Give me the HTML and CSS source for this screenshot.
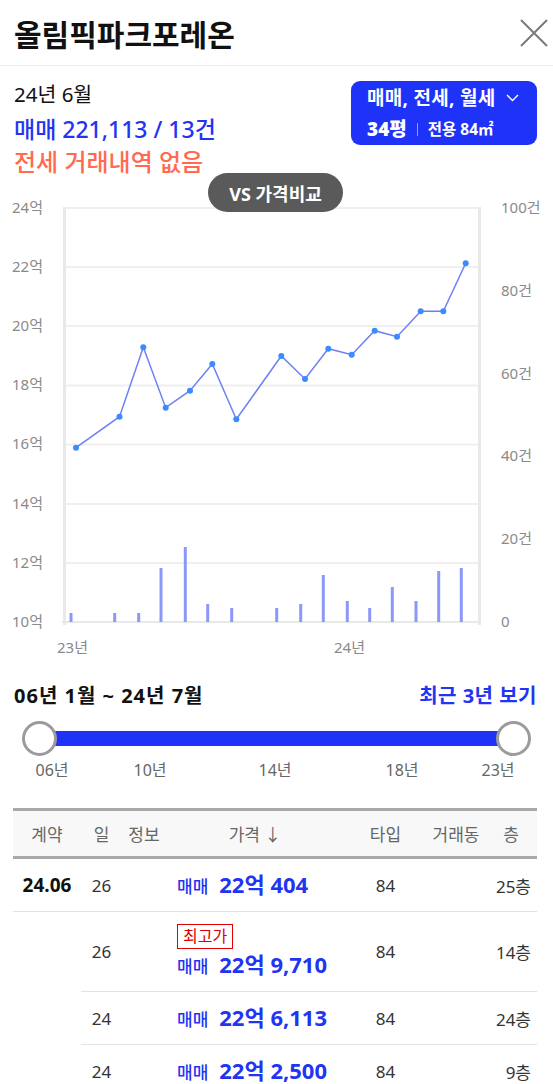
FILE: index.html
```html
<!DOCTYPE html>
<html lang="ko">
<head>
    <meta charset="UTF-8">
    <meta name="viewport" content="width=device-width, initial-scale=1.0">
    <title>올림픽파크포레온 실거래가</title>
    <link rel="stylesheet" href="styles.css">
</head>
<body>

<div class="panel">
    <div class="header">
        <h1>올림픽파크포레온</h1>
        <button class="close" aria-label="닫기">
            <svg width="30" height="30" viewBox="0 0 30 30">
                <path d="M2 2 L28 28 M28 2 L2 28" stroke="#7a7a7a" stroke-width="2" fill="none"/>
            </svg>
        </button>
    </div>

    <div class="summary">
        <div class="summary-text">
            <div class="month">24년 6월</div>
            <div class="trade">매매 221,113 / 13건</div>
            <div class="rent">전세 거래내역 없음</div>
        </div>
        <div class="filter">
            <div class="filter-type">매매, 전세, 월세
                <svg width="13" height="8" viewBox="0 0 13 8">
                    <path d="M1 1 L6.5 6.5 L12 1" stroke="#fff" stroke-width="1.4" fill="none"/>
                </svg>
            </div>
            <div class="filter-size"><b>34평</b><span class="sep"></span>전용 84㎡</div>
        </div>
    </div>

    <div class="chart">
        <button class="vs">VS 가격비교</button>
        <svg width="553" height="485" viewBox="0 180 553 485">
            <!-- grid -->
            <g stroke="#efefef" stroke-width="2">
                <line x1="64" y1="208" x2="479" y2="208"/>
                <line x1="64" y1="267" x2="479" y2="267"/>
                <line x1="64" y1="326" x2="479" y2="326"/>
                <line x1="64" y1="385.5" x2="479" y2="385.5"/>
                <line x1="64" y1="444.5" x2="479" y2="444.5"/>
                <line x1="64" y1="504" x2="479" y2="504"/>
                <line x1="64" y1="563" x2="479" y2="563"/>
            </g>
            <g stroke="#e9e9e9">
                <line x1="64.5" y1="207" x2="64.5" y2="625" stroke-width="3"/>
                <line x1="479.5" y1="207" x2="479.5" y2="625" stroke-width="3"/>
                <line x1="62" y1="622" x2="481" y2="622" stroke-width="2"/>
            </g>

            <!-- axis labels -->
            <g class="axis" text-anchor="end">
                <text x="43" y="213">24억</text>
                <text x="43" y="272">22억</text>
                <text x="43" y="331">20억</text>
                <text x="43" y="390">18억</text>
                <text x="43" y="449">16억</text>
                <text x="43" y="509">14억</text>
                <text x="43" y="568">12억</text>
                <text x="43" y="627">10억</text>
            </g>
            <g class="axis">
                <text x="501" y="213">100건</text>
                <text x="501" y="296">80건</text>
                <text x="501" y="379">60건</text>
                <text x="501" y="461">40건</text>
                <text x="501" y="544">20건</text>
                <text x="501" y="627">0</text>
            </g>
            <g class="axis" text-anchor="middle">
                <text x="72.5" y="653">23년</text>
                <text x="349.5" y="653">24년</text>
            </g>

            <!-- volume bars -->
            <g fill="#8b98fb">
                <rect x="69.5" y="613" width="3" height="9"/>
                <rect x="113.2" y="613" width="3" height="9"/>
                <rect x="137.2" y="613" width="3" height="9"/>
                <rect x="159.5" y="568" width="3" height="54"/>
                <rect x="183.8" y="547" width="3" height="75"/>
                <rect x="206.2" y="604" width="3" height="18"/>
                <rect x="230.2" y="608" width="3" height="14"/>
                <rect x="275.2" y="608" width="3" height="14"/>
                <rect x="299.2" y="604" width="3" height="18"/>
                <rect x="321.8" y="575" width="3" height="47"/>
                <rect x="345.8" y="601" width="3" height="21"/>
                <rect x="368.2" y="608" width="3" height="14"/>
                <rect x="390.8" y="587" width="3" height="35"/>
                <rect x="414.5" y="601" width="3" height="21"/>
                <rect x="437.2" y="571" width="3" height="51"/>
                <rect x="459.8" y="568" width="3" height="54"/>
            </g>

            <!-- price line -->
            <polyline fill="none" stroke="#6f80f6" stroke-width="1.5"
                points="76,447.7 119.5,416.7 143.3,347.3 165.7,407.7 190,390.7 212.3,364 236.3,419.3 281.3,356 305,379 328.3,348.7 351.7,354.7 374.7,330.7 397,336.7 420.7,311.3 443.3,311.3 465.7,263.3"/>
            <g fill="#3b8bff">
                <circle cx="76" cy="447.7" r="3"/>
                <circle cx="119.5" cy="416.7" r="3"/>
                <circle cx="143.3" cy="347.3" r="3"/>
                <circle cx="165.7" cy="407.7" r="3"/>
                <circle cx="190" cy="390.7" r="3"/>
                <circle cx="212.3" cy="364" r="3"/>
                <circle cx="236.3" cy="419.3" r="3"/>
                <circle cx="281.3" cy="356" r="3"/>
                <circle cx="305" cy="379" r="3"/>
                <circle cx="328.3" cy="348.7" r="3"/>
                <circle cx="351.7" cy="354.7" r="3"/>
                <circle cx="374.7" cy="330.7" r="3"/>
                <circle cx="397" cy="336.7" r="3"/>
                <circle cx="420.7" cy="311.3" r="3"/>
                <circle cx="443.3" cy="311.3" r="3"/>
                <circle cx="465.7" cy="263.3" r="3"/>
            </g>
        </svg>
    </div>

    <div class="range">
        <div class="range-head">
            <span class="range-label">06년 1월 ~ 24년 7월</span>
            <a class="recent">최근 3년 보기</a>
        </div>
        <div class="slider">
            <span class="knob"></span>
            <div class="track"></div>
            <span class="knob"></span>
        </div>
        <div class="ticks">
            <span style="left: 38px">06년</span>
            <span style="left: 136px">10년</span>
            <span style="left: 261px">14년</span>
            <span style="left: 388px">18년</span>
            <span style="left: 484px">23년</span>
        </div>
    </div>

    <table class="deals">
        <colgroup>
            <col style="width: 68px">
            <col style="width: 41px">
            <col style="width: 44px">
            <col style="width: 178px">
            <col style="width: 83px">
            <col style="width: 58px">
            <col style="width: 52px">
        </colgroup>
        <thead>
            <tr>
                <th>계약</th>
                <th>일</th>
                <th>정보</th>
                <th>가격 ↓</th>
                <th>타입</th>
                <th>거래동</th>
                <th>층</th>
            </tr>
        </thead>
        <tbody>
            <tr>
                <td class="date">24.06</td>
                <td class="day">26</td>
                <td></td>
                <td class="price"><span class="kind">매매</span><span class="amount">22억 404</span></td>
                <td class="type">84</td>
                <td></td>
                <td class="floor">25층</td>
            </tr>
            <tr class="tall">
                <td class="date empty"></td>
                <td class="day">26</td>
                <td></td>
                <td class="price">
                    <span class="badge">최고가</span><br>
                    <span class="kind">매매</span><span class="amount">22억 9,710</span>
                </td>
                <td class="type">84</td>
                <td></td>
                <td class="floor">14층</td>
            </tr>
            <tr>
                <td class="date empty"></td>
                <td class="day">24</td>
                <td></td>
                <td class="price"><span class="kind">매매</span><span class="amount">22억 6,113</span></td>
                <td class="type">84</td>
                <td></td>
                <td class="floor">24층</td>
            </tr>
            <tr>
                <td class="date empty"></td>
                <td class="day">24</td>
                <td></td>
                <td class="price"><span class="kind">매매</span><span class="amount">22억 2,500</span></td>
                <td class="type">84</td>
                <td></td>
                <td class="floor">9층</td>
            </tr>
        </tbody>
    </table>
</div>

</body>
</html>
```

FILE: styles.css
```css
html, body {
    margin: 0;
    padding: 0;
    overflow: hidden;
}
body {
    font-family: "Noto Sans", "Noto Sans CJK KR", sans-serif;
    background: #fff;
    color: #111;
}
.panel {
    width: 553px;
}
.header {
    height: 65px;
    border-bottom: 1px solid #ebebeb;
    display: flex;
    align-items: center;
    justify-content: space-between;
    padding: 0 4px 0 14px;
}
.header h1 {
    margin: 5px 0 0 0;
    font-size: 30px;
    line-height: 34px;
    font-weight: bold;
}
.close {
    border: none;
    background: none;
    padding: 0;
    width: 30px;
    height: 30px;
    cursor: pointer;
}
.summary {
    height: 114px;
    box-sizing: border-box;
    padding: 14px 16px 0 14px;
    display: flex;
    justify-content: space-between;
    align-items: flex-start;
}
.month {
    font-size: 20.5px;
    line-height: 28px;
}
.trade {
    margin-top: 4px;
    font-size: 23px;
    line-height: 34px;
    font-weight: 500;
    color: #1f35f2;
}
.rent {
    font-size: 24px;
    line-height: 32px;
    font-weight: 500;
    color: #ff6a50;
}
.filter {
    margin-top: 1px;
    width: 186px;
    height: 64px;
    box-sizing: border-box;
    padding: 5px 14px 0 16px;
    background: #1f33f8;
    border-radius: 9px;
    color: #fff;
    font-weight: bold;
}
.filter-type {
    font-size: 19px;
    line-height: 24px;
    letter-spacing: 0.3px;
    display: flex;
    align-items: center;
}
.filter-type svg {
    margin-left: 10px;
}
.filter-size {
    margin-top: 6px;
    font-size: 15.5px;
    line-height: 26px;
    display: flex;
    align-items: center;
}
.filter-size b {
    font-size: 19px;
}
.sep {
    width: 1px;
    height: 13px;
    background: #8f9cff;
    margin: 0 10px;
}
.chart {
    position: relative;
    height: 485px;
}
.chart svg {
    display: block;
}
.axis text {
    font-size: 15px;
    fill: #8a8a8a;
}
.vs {
    position: absolute;
    top: -7px;
    left: 208px;
    width: 135px;
    height: 39px;
    border: none;
    border-radius: 20px;
    background: #5a5a5a;
    color: #fff;
    font-family: inherit;
    font-size: 18px;
    font-weight: bold;
    z-index: 2;
}
.range {
    padding: 19px 16px 0 14px;
}
.range-head {
    display: flex;
    justify-content: space-between;
    font-size: 20px;
    line-height: 24px;
    font-weight: bold;
}
.range-label {
    letter-spacing: 1px;
}
.recent {
    color: #1f35f2;
    letter-spacing: 0.5px;
}
.slider {
    margin: 13px 6px 0 8px;
    display: flex;
    align-items: center;
}
.knob {
    position: relative;
    z-index: 1;
    width: 29px;
    height: 29px;
    border: 3px solid #9b9b9b;
    border-radius: 50%;
    background: #fff;
    flex: none;
}
.track {
    flex: 1;
    height: 15px;
    margin: 0 -2px;
    background: #1f33f8;
}
.ticks {
    position: relative;
    height: 20px;
    margin-top: 4px;
}
.ticks span {
    position: absolute;
    top: 0;
    transform: translateX(-50%);
    font-size: 16px;
    line-height: 20px;
    color: #666;
}
.deals {
    margin: 28px 16px 0 13px;
    width: 524px;
    table-layout: fixed;
    border-collapse: collapse;
}
.deals th {
    height: 45px;
    padding: 0;
    background: #f8f8f8;
    border-top: 3px solid #a9a9a9;
    border-bottom: 3px solid #a9a9a9;
    font-size: 17px;
    font-weight: normal;
    color: #666;
}
.deals td {
    height: 52px;
    padding: 0;
    border-bottom: 1px solid #e3e3e3;
    text-align: center;
    font-size: 17px;
    color: #333;
}
.deals tr.tall td {
    height: 79px;
}
.deals td.empty {
    border-bottom: none;
}
.deals td.date {
    font-size: 19px;
    font-weight: bold;
    color: #111;
}
.deals td.price {
    text-align: left;
    padding-left: 11px;
    line-height: 28px;
}
.deals td.floor {
    text-align: right;
    padding-right: 6px;
}
.kind {
    font-size: 17px;
    font-weight: 500;
    color: #1f35f2;
}
.amount {
    margin-left: 11px;
    font-size: 22px;
    font-weight: bold;
    color: #1f35f2;
}
.badge {
    display: inline-block;
    border: 1px solid #e00000;
    padding: 0 5px;
    font-size: 16px;
    line-height: 23px;
    color: #d80000;
}
```
